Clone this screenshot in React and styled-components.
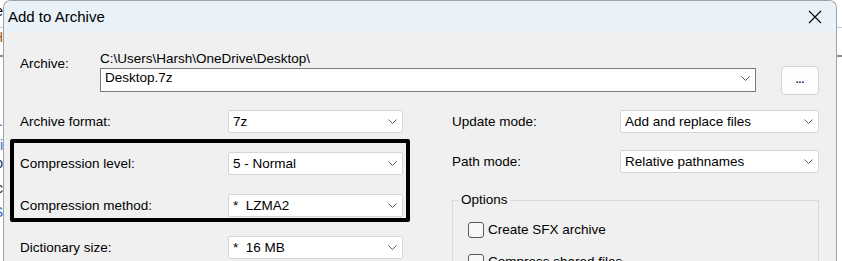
import React from "react";
import styled, { createGlobalStyle } from "styled-components";

const GlobalStyle = createGlobalStyle`
  html, body {
    margin: 0;
    padding: 0;
    height: 261px;
    overflow: hidden;
    background: #fff;
  }
  body {
    font-family: "Liberation Sans", Arial, sans-serif;
    color: #000;
  }
`;

const Desktop = styled.div`
  display: flex;
  align-items: flex-start;
  height: 261px;
  overflow: hidden;
  background:
    linear-gradient(#c6c6c6, #c6c6c6) 0 27px / 100% 1px no-repeat,
    linear-gradient(#8e8e8e, #8e8e8e) 0 55px / 100% 2px no-repeat,
    #fff;
`;

const BackStrip = styled.div`
  flex: none;
  width: 3px;
  display: flex;
  flex-direction: column;
  overflow: hidden;
`;

const Glyph = styled.div`
  display: flex;
  justify-content: flex-end;
  width: 3px;
  height: 14px;
  margin-top: ${({ $gap }) => $gap}px;
  font-size: 14px;
  line-height: 14px;
  white-space: nowrap;
  color: ${({ $color }) => $color || "#000"};
`;

const Dialog = styled.div`
  position: relative;
  flex: none;
  width: 834px;
  box-sizing: border-box;
  border: 1px solid #a3a3a3;
  border-bottom: none;
  border-radius: 8px 8px 0 0;
  background: #f0f0f0;
  overflow: hidden;
`;

const TitleBar = styled.div`
  display: flex;
  align-items: center;
  justify-content: space-between;
  height: 31px;
  padding: 0 14px 0 4px;
  background: #e9f1f9;
`;

const Title = styled.span`
  font-size: 15px;
`;

const Body = styled.div`
  padding: 19px 17px 40px 16px;
  font-size: 13.5px;
  line-height: 16px;
`;

const ArchiveSection = styled.div`
  display: grid;
  grid-template-columns: 80px 656px 1fr 38px;
  grid-template-rows: 16px 24px;
  row-gap: 1px;
`;

const ArchiveLabel = styled.div`
  grid-column: 1;
  grid-row: 1 / 3;
  margin-top: 5px;
`;

const PathText = styled.div`
  grid-column: 2;
  grid-row: 1;
`;

const Combo = styled.div`
  display: flex;
  align-items: center;
  justify-content: space-between;
  box-sizing: border-box;
  height: ${({ $h }) => $h}px;
  padding: 0 5px ${({ $lift }) => $lift || 0}px 4px;
  background: #fff;
  border: 1px solid ${({ $edge }) => $edge || "#d6d6d6"};
  border-radius: ${({ $round }) => ($round ? 2 : 0)}px;
  white-space: pre;
`;

const ArchiveCombo = styled(Combo)`
  grid-column: 2;
  grid-row: 2;
`;

const BrowseButton = styled.button`
  grid-column: 4;
  grid-row: 2;
  align-self: center;
  height: 29px;
  padding: 0 0 1px;
  background: #fdfdfd;
  border: 1px solid #d3d3d3;
  border-radius: 4px;
  font-family: inherit;
  font-size: 10px;
  font-weight: bold;
  color: #15156a;
`;

const Settings = styled.div`
  display: grid;
  grid-template-columns: 383px 367px;
  column-gap: 49px;
  margin-top: 18px;
  align-items: start;
`;

const FieldGrid = styled.div`
  display: grid;
  grid-template-columns: ${({ $label }) => $label}px 1fr;
  grid-auto-rows: 23px;
  row-gap: ${({ $gap }) => $gap}px;
  align-items: center;
`;

const RightColumn = styled.div`
  display: flex;
  flex-direction: column;
`;

const Group = styled.fieldset`
  margin: 19px 0 0;
  padding: 0 0 10px 6px;
  min-width: 0;
  border: 1px solid #dadada;
`;

const Legend = styled.legend`
  padding: 0 2px;
  font-size: 13.5px;
  line-height: 16px;
`;

const CheckList = styled.div`
  display: flex;
  flex-direction: column;
  gap: 16px;
  margin: 14px 0 0 9px;
`;

const CheckRow = styled.label`
  display: flex;
  align-items: center;
  gap: 4px;
  height: 16px;
`;

const Box = styled.span`
  flex: none;
  width: 16px;
  height: 16px;
  box-sizing: border-box;
  border: 1px solid #5a5a5a;
  border-radius: 3px;
  background: #f8f8f8;
`;

const Highlight = styled.div`
  position: absolute;
  left: 6px;
  top: 138px;
  width: 400px;
  height: 83px;
  box-sizing: border-box;
  border: 4px solid #000;
  border-radius: 2px;
  pointer-events: none;
`;

const Chevron = () => (
  <svg width="9" height="5" viewBox="0 0 9 5" fill="none">
    <path d="M0.5 0.5 L4.5 4.5 L8.5 0.5" stroke="#555" strokeWidth="1" />
  </svg>
);

const CloseIcon = () => (
  <svg width="14" height="14" viewBox="0 0 14 14" fill="none">
    <path d="M1 1 L13 13 M13 1 L1 13" stroke="#000" strokeWidth="1.1" />
  </svg>
);

const Select = ({ children }) => (
  <Combo $h={23} $round>
    <span>{children}</span>
    <Chevron />
  </Combo>
);

const leftFields = [
  ["Archive format:", "7z"],
  ["Compression level:", "5 - Normal"],
  ["Compression method:", "*  LZMA2"],
  ["Dictionary size:", "*  16 MB"],
];

const rightFields = [
  ["Update mode:", "Add and replace files"],
  ["Path mode:", "Relative pathnames"],
];

const backGlyphs = [
  ["e", 4, "#000"],
  ["H", 12, "#9a5a10"],
  [".", 70, "#1f6fc5"],
  ["i", 10, "#1f6fc5"],
  ["o", 4, "#10306e"],
  ["c", 11, "#222"],
  ["S", 10, "#1f6fc5"],
];

export default function App() {
  return (
    <>
      <GlobalStyle />
      <Desktop>
        <BackStrip>
          {backGlyphs.map(([ch, gap, color], i) => (
            <Glyph key={i} $gap={gap} $color={color}>
              <span>{ch}</span>
            </Glyph>
          ))}
        </BackStrip>
        <Dialog>
          <TitleBar>
            <Title>Add to Archive</Title>
            <CloseIcon />
          </TitleBar>
          <Body>
            <ArchiveSection>
              <ArchiveLabel>Archive:</ArchiveLabel>
              <PathText>C:\Users\Harsh\OneDrive\Desktop\</PathText>
              <ArchiveCombo $h={24} $edge="#7a7a7a" $lift={4}>
                <span>Desktop.7z</span>
                <Chevron />
              </ArchiveCombo>
              <BrowseButton>...</BrowseButton>
            </ArchiveSection>
            <Settings>
              <FieldGrid $label={208} $gap={19}>
                {leftFields.map(([label, value]) => (
                  <React.Fragment key={label}>
                    <span>{label}</span>
                    <Select>{value}</Select>
                  </React.Fragment>
                ))}
              </FieldGrid>
              <RightColumn>
                <FieldGrid $label={168} $gap={17}>
                  {rightFields.map(([label, value]) => (
                    <React.Fragment key={label}>
                      <span>{label}</span>
                      <Select>{value}</Select>
                    </React.Fragment>
                  ))}
                </FieldGrid>
                <Group>
                  <Legend>Options</Legend>
                  <CheckList>
                    <CheckRow>
                      <Box />
                      Create SFX archive
                    </CheckRow>
                    <CheckRow>
                      <Box />
                      Compress shared files
                    </CheckRow>
                  </CheckList>
                </Group>
              </RightColumn>
            </Settings>
          </Body>
          <Highlight />
        </Dialog>
      </Desktop>
    </>
  );
}
